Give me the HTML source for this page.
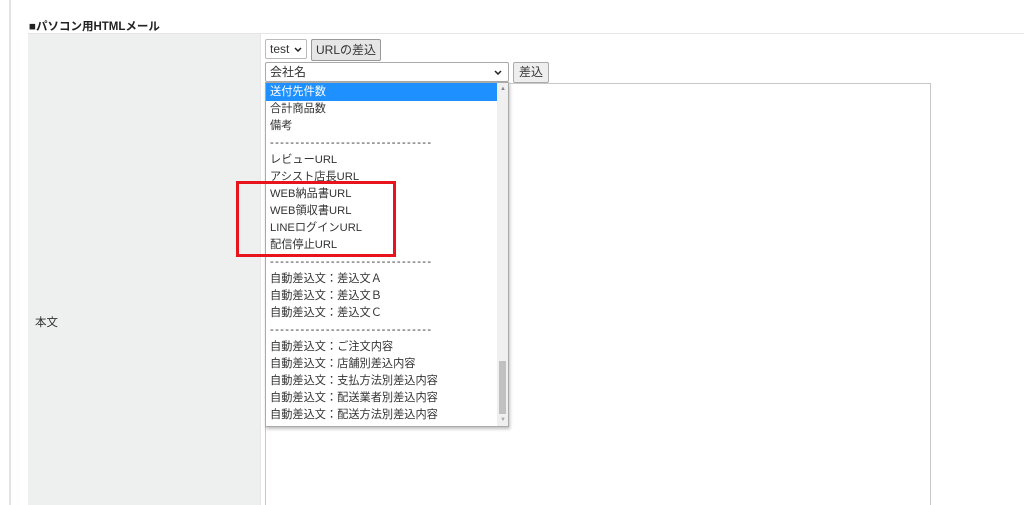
<!DOCTYPE html>
<html><head><meta charset="utf-8"><style>
html,body{margin:0;width:1024px;height:505px;overflow:hidden}
body{background:#fff;position:relative;font-family:"Liberation Sans","Noto Sans CJK JP",sans-serif;font-size:12px;color:#333}
.a{position:absolute}
.item{position:absolute;left:4px;top:1px;height:17px;line-height:17px;font-size:11.2px;color:#333;white-space:nowrap}
.dash{letter-spacing:1.35px}
</style></head><body>
<div class="a" style="left:9px;top:0;width:2px;height:505px;background:#e4e4e4"></div>
<div class="a" style="left:29px;top:18px;font-weight:bold;font-size:11.5px;color:#222">■パソコン用HTMLメール</div>
<div class="a" style="left:28px;top:33px;width:996px;height:1px;background:#e6e6e6"></div>
<div class="a" style="left:28px;top:34px;width:232px;height:471px;background:#eef0ef"></div>
<div class="a" style="left:260px;top:34px;width:1px;height:471px;background:#e6e6e6"></div>
<div class="a" style="left:35px;top:314px;font-size:11.5px">本文</div>
<div class="a" style="left:265px;top:39px;width:42px;height:20px;border:1px solid #bbb;border-radius:2px;background:#fff;box-sizing:border-box;line-height:18px;padding-left:4px;font-size:12px">test<svg style="position:absolute;right:4px;top:7px" width="8" height="5" viewBox="0 0 8 5"><path d="M1 1L4 4L7 1" stroke="#222" stroke-width="1.5" fill="none"/></svg></div>
<div class="a" style="left:311px;top:39px;width:70px;height:22px;border:1px solid #999;border-radius:2px;background:#e6e6e6;box-sizing:border-box;line-height:20px;text-align:center;font-size:12px">URLの差込</div>
<div class="a" style="left:265px;top:62px;width:244px;height:20px;border:1px solid #aaa;border-radius:2px;background:#fff;box-sizing:border-box;line-height:18px;padding-left:4px;font-size:12px">会社名<svg style="position:absolute;right:6px;top:7px" width="8" height="5" viewBox="0 0 8 5"><path d="M1 1L4 4L7 1" stroke="#222" stroke-width="1.5" fill="none"/></svg></div>
<div class="a" style="left:513px;top:62px;width:36px;height:21px;border:1px solid #aaa;border-radius:2px;background:#eee;box-sizing:border-box;line-height:19px;text-align:center;font-size:12px">差込</div>
<div class="a" style="left:265px;top:83px;width:666px;height:430px;border:1px solid #c8c8c8;box-sizing:border-box;background:#fff"></div>
<div class="a" style="left:265px;top:82px;width:244px;height:345px;border:1px solid #aaa;box-sizing:border-box;background:#fff;box-shadow:1px 2px 3px rgba(0,0,0,.25)">
<div class="a" style="left:0;top:0;width:231px;height:18px;background:#1e90ff"></div>
<div class="item" style="color:#fff">送付先件数</div>
<div class="item" style="top:18px">合計商品数</div>
<div class="item" style="top:35px">備考</div>
<div class="item dash" style="top:52px">--------------------------------</div>
<div class="item" style="top:69px">レビューURL</div>
<div class="item" style="top:86px">アシスト店長URL</div>
<div class="item" style="top:103px">WEB納品書URL</div>
<div class="item" style="top:120px">WEB領収書URL</div>
<div class="item" style="top:137px">LINEログインURL</div>
<div class="item" style="top:154px">配信停止URL</div>
<div class="item dash" style="top:171px">--------------------------------</div>
<div class="item" style="top:188px">自動差込文：差込文Ａ</div>
<div class="item" style="top:205px">自動差込文：差込文Ｂ</div>
<div class="item" style="top:222px">自動差込文：差込文Ｃ</div>
<div class="item dash" style="top:239px">--------------------------------</div>
<div class="item" style="top:256px">自動差込文：ご注文内容</div>
<div class="item" style="top:273px">自動差込文：店舗別差込内容</div>
<div class="item" style="top:290px">自動差込文：支払方法別差込内容</div>
<div class="item" style="top:307px">自動差込文：配送業者別差込内容</div>
<div class="item" style="top:324px">自動差込文：配送方法別差込内容</div>
<div class="a" style="left:231px;top:0;width:11px;height:343px;background:#f0f0f0"></div>
<div class="a" style="left:233px;top:278px;width:7px;height:53px;background:#c1c1c1"></div>
<div class="a" style="left:234px;top:3px;font-size:6px;color:#888">▲</div>
<div class="a" style="left:234px;top:334px;font-size:6px;color:#aaa">▼</div>
</div>
<div class="a" style="left:236px;top:181px;width:160px;height:76px;border:3px solid #e8141b;box-sizing:border-box"></div>
</body></html>
